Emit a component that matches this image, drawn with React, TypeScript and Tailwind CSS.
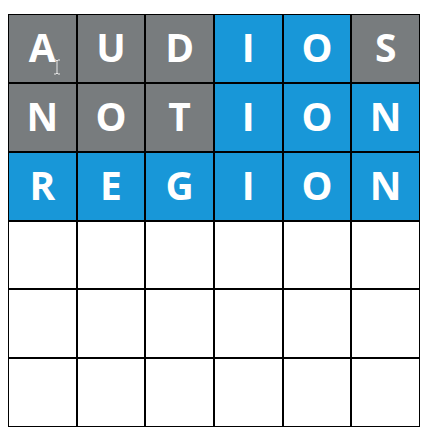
import React from "react";

type Tile = { ch: string; state: "gray" | "blue" | "empty" };

const rows: Tile[][] = [
  [
    { ch: "A", state: "gray" },
    { ch: "U", state: "gray" },
    { ch: "D", state: "gray" },
    { ch: "I", state: "blue" },
    { ch: "O", state: "blue" },
    { ch: "S", state: "gray" },
  ],
  [
    { ch: "N", state: "gray" },
    { ch: "O", state: "gray" },
    { ch: "T", state: "gray" },
    { ch: "I", state: "blue" },
    { ch: "O", state: "blue" },
    { ch: "N", state: "blue" },
  ],
  "REGION".split("").map((ch) => ({ ch, state: "blue" as const })),
  ...Array.from({ length: 3 }, () =>
    Array.from({ length: 6 }, () => ({ ch: "", state: "empty" as const }))
  ),
];

const cellColor = {
  gray: "bg-[#787c7e]",
  blue: "bg-[#1897d8]",
  empty: "bg-white",
};

const App: React.FC = () => {
  return (
    <div className="relative w-[426px] h-[435px] bg-white pt-[14px] pl-[8px]">
      <div className="grid grid-cols-6 grid-rows-6 w-[412px] h-[413px]">
        {rows.flat().map((t, i) => (
          <div
            key={i}
            className={`${cellColor[t.state]} min-h-0 border border-black flex items-center justify-center pb-[4px] text-white font-bold text-[39px] leading-none font-['Open_Sans',sans-serif]`}
          >
            {t.ch}
          </div>
        ))}
      </div>
      {/* text cursor */}
      <svg
        className="absolute left-[53px] top-[59px]"
        width="8"
        height="16"
        viewBox="0 0 8 16"
      >
        <path
          d="M1 1h2l1 1 1-1h2M4 2v12M1 15h2l1-1 1 1h2"
          fill="none"
          stroke="#e8e8e8"
          strokeWidth="1"
        />
      </svg>
    </div>
  );
};

export default App;
